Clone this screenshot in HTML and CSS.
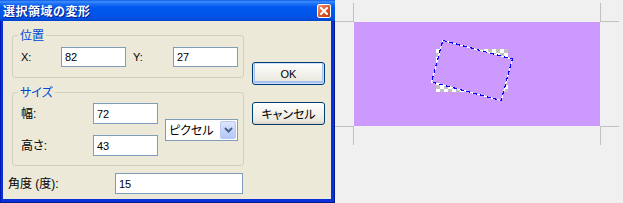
FILE: index.html
```html
<!DOCTYPE html>
<html lang="ja">
<head>
<meta charset="utf-8">
<title>選択領域の変形</title>
<link rel="stylesheet" href="styles.css">
</head>
<body>
<div class="screen">
  <div class="dialog">
    <div class="titlebar">
      <span class="title">選択領域の変形</span>
      <span class="close">
        <svg width="8" height="8" viewBox="0 0 8 8"><path d="M1 1 L7 7 M7 1 L1 7" stroke="#fff" stroke-width="2" fill="none" stroke-linecap="square"/></svg>
      </span>
    </div>
    <div class="client">
      <div class="main">
        <fieldset class="group group-pos">
          <legend>位置</legend>
          <div class="pos-row">
            <span class="lbl lbl-xy">X:</span><div class="field field-pos">82</div>
            <span class="lbl lbl-xy lbl-y">Y:</span><div class="field field-pos">27</div>
          </div>
        </fieldset>
        <fieldset class="group group-size">
          <legend>サイズ</legend>
          <div class="size-body">
            <div class="size-fields">
              <div class="size-row"><span class="lbl lbl-size">幅:</span><div class="field field-size">72</div></div>
              <div class="size-row"><span class="lbl lbl-size">高さ:</span><div class="field field-size">43</div></div>
            </div>
            <div class="select">
              <span class="select-text">ピクセル</span>
              <span class="drop"><svg width="9" height="6" viewBox="0 0 9 6"><path d="M1 1 L4.5 4.5 L8 1" stroke="#4d6185" stroke-width="2" fill="none"/></svg></span>
            </div>
          </div>
        </fieldset>
        <div class="angle-row"><span class="lbl lbl-angle">角度 (度):</span><div class="field field-angle">15</div></div>
      </div>
      <div class="buttons">
        <div class="btn btn-default"><span class="btn-ok">OK</span></div>
        <div class="btn btn-cancel">キャンセル</div>
      </div>
    </div>
  </div>
  <div class="workspace">
    <div class="mark mark-tl"></div>
    <div class="mark"></div>
    <div class="mark mark-tr"></div>
    <div class="mark"></div>
    <div class="image">
      <svg class="image-svg" width="246" height="104" viewBox="0 0 246 104">
        <defs>
          <pattern id="chk" width="8" height="8" patternUnits="userSpaceOnUse" x="82" y="27">
            <rect width="8" height="8" fill="#ffffff"/>
            <rect x="4" y="0" width="4" height="4" fill="#c0c0c0"/>
            <rect x="0" y="4" width="4" height="4" fill="#c0c0c0"/>
          </pattern>
        </defs>
        <rect x="82" y="27" width="72" height="43" fill="url(#chk)"/>
        <g transform="rotate(15 118 48.5)" shape-rendering="crispEdges">
          <rect x="82" y="27" width="72" height="43" fill="#cc99ff"/>
          <rect x="82" y="27" width="72" height="43" fill="none" stroke="#ffffff" stroke-width="1.2"/>
          <rect x="82" y="27" width="72" height="43" fill="none" stroke="#0000ff" stroke-width="1.2" stroke-dasharray="4 3"/>
        </g>
      </svg>
    </div>
    <div class="mark"></div>
    <div class="mark mark-bl"></div>
    <div class="mark"></div>
    <div class="mark mark-br"></div>
  </div>
</div>
</body>
</html>
```

FILE: styles.css
```css
* { box-sizing: border-box; }
html, body { margin: 0; padding: 0; }
body {
  width: 623px;
  height: 203px;
  overflow: hidden;
  background: #f0f0f0;
  color: #000;
  font-family: "Liberation Sans", "Noto Sans CJK JP", sans-serif;
  font-size: 11px;
  font-feature-settings: "palt";
}
.screen { display: flex; align-items: flex-start; }

/* dialog frame */
.dialog {
  flex: none;
  width: 335px;
  height: 203px;
  display: flex;
  flex-direction: column;
  background: #0831d9;
  box-shadow: inset 1px 0 0 #0019b0, inset -1px 0 0 #001890, inset 0 -1px 0 #001890;
}
.titlebar {
  height: 21px;
  flex: none;
  display: flex;
  align-items: center;
  justify-content: space-between;
  padding: 0 4px 0 3px;
  background: linear-gradient(180deg, #0a5ae6 0%, #3d8dfd 8%, #1d6ff5 18%, #0058ee 35%, #0055e8 70%, #004fe0 90%, #0043c8 100%);
}
.title {
  color: #fff;
  font-family: "Noto Sans CJK JP", sans-serif;
  font-weight: bold;
  font-size: 12px;
  line-height: 14px;
  letter-spacing: 0.5px;
  font-feature-settings: normal;
  text-shadow: 1px 1px 0 #0b1d87;
}
.close {
  width: 14px;
  height: 14px;
  border: 1px solid #fff;
  border-radius: 2px;
  background: linear-gradient(135deg, #f4a386 0%, #e4643c 40%, #d4461d 75%, #c23c16 100%);
  display: flex;
  align-items: center;
  justify-content: center;
}
.close svg { display: block; }

.client {
  flex: 1;
  margin: 0 4px 4px 3px;
  background: #ece9d8;
  display: flex;
  gap: 8px;
  padding: 7px 6px 0 9px;
}
.main { width: 232px; flex: none; display: flex; flex-direction: column; }

/* group boxes */
.group {
  margin: 0;
  min-width: 0;
  border: 1px solid #d0d0bf;
  border-radius: 3px;
  padding: 5px 5px 10px 8px;
}
.group legend {
  padding: 0 2px;
  margin-left: -3px;
  color: #0046d5;
  font-family: "Noto Sans CJK JP", sans-serif;
  font-size: 12px;
  line-height: 14px;
}
.group-size { margin-top: 7px; padding: 4px 5px 9px 8px; }

.lbl { flex: none; line-height: 14px; }
.lbl-xy { width: 40px; }
.lbl-y { margin-left: 7px; }
.lbl-size { width: 72px; font-size: 12px; }
.lbl-angle { width: 107px; font-size: 12px; }

.field {
  flex: none;
  border: 1px solid #7f9db9;
  background: #fff;
  padding: 0 3px;
  display: flex;
  align-items: center;
  font-size: 11px;
}
.field-pos { width: 65px; height: 20px; }
.field-size { width: 65px; height: 21px; }
.field-angle { width: 128px; height: 21px; }

.pos-row { display: flex; align-items: center; }

.size-body { display: flex; align-items: center; gap: 7px; }
.size-fields { display: flex; flex-direction: column; gap: 11px; }
.size-row { display: flex; align-items: center; }

.select {
  width: 73px;
  height: 22px;
  border: 1px solid #7f9db9;
  background: #fff;
  display: flex;
  align-items: center;
  justify-content: space-between;
  padding: 1px;
}
.select-text { padding-left: 2px; font-size: 12px; font-family: "Noto Sans CJK JP", sans-serif; }
.drop {
  width: 16px;
  height: 18px;
  border: 1px solid #b9c9ef;
  border-radius: 2px;
  background: linear-gradient(180deg, #dce6fd 0%, #c5d5fc 50%, #b3c8f7 100%);
  display: flex;
  align-items: center;
  justify-content: center;
}
.drop svg { display: block; }

.angle-row { margin: 7px 0 0 -4px; display: flex; align-items: center; }

/* buttons */
.buttons { width: 73px; flex: none; display: flex; flex-direction: column; padding-top: 34px; }
.btn {
  height: 23px;
  border: 1px solid #003c74;
  border-radius: 3px;
  background: linear-gradient(180deg, #ffffff 0%, #f5f4ef 40%, #ebe8dd 85%, #d8d2c3 100%);
  display: flex;
  align-items: center;
  justify-content: center;
}
.btn-default { box-shadow: inset 0 0 0 1px #cee0fb, inset 0 -1px 0 2px #a9c1ef; }
.btn-ok { font-size: 11px; }
.btn-cancel { margin-top: 17px; font-size: 12px; font-family: "Noto Sans CJK JP", sans-serif; }

/* workspace */
.workspace {
  display: grid;
  grid-template-columns: 19px 246px 19px;
  grid-template-rows: 19px 104px 19px;
  margin-top: 3px;
}
.mark-tl { border-right: 1px solid #c0c0c0; border-bottom: 1px solid #c0c0c0; }
.mark-tr { border-left: 1px solid #c0c0c0; border-bottom: 1px solid #c0c0c0; }
.mark-bl { border-right: 1px solid #c0c0c0; border-top: 1px solid #c0c0c0; }
.mark-br { border-left: 1px solid #c0c0c0; border-top: 1px solid #c0c0c0; }
.image { background: #cc99ff; }
.image-svg { display: block; }
```
